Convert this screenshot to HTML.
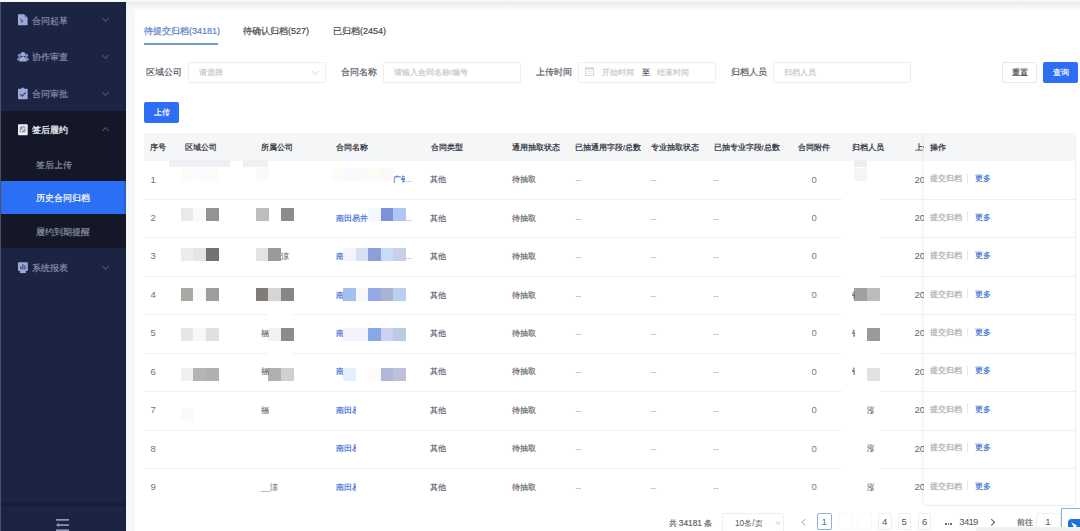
<!DOCTYPE html><html><head><meta charset="utf-8"><style>
*{box-sizing:border-box;margin:0;padding:0}
svg{display:block}
html,body{width:1080px;height:531px;overflow:hidden;background:#fff;font-family:"Liberation Sans",sans-serif;position:relative}
.td,.lbl,.ph,.mt,.st,.btn{-webkit-text-stroke:0.18px currentColor}
.a{position:absolute;white-space:nowrap}
#side{position:absolute;left:0;top:2px;width:126px;height:529px;background:#1b2443}
.mt{position:absolute;left:32px;font-size:8.8px;line-height:12px;color:#868da6;white-space:nowrap}
.st{position:absolute;left:36px;font-size:8.8px;line-height:12px;color:#8b90a0;white-space:nowrap}
.chev{position:absolute;left:103px;width:5px;height:5px;border-right:1px solid #4d5679;border-bottom:1px solid #4d5679;transform:rotate(45deg)}
.lbl{position:absolute;font-size:9px;color:#555b66;line-height:12px;white-space:nowrap}
.inp{position:absolute;border:1px solid #edeef1;border-radius:2px;background:#fff;height:21px;top:61.5px}
.ph{position:absolute;font-size:8px;color:#c5c8ce;line-height:12px;white-space:nowrap}
.btn{position:absolute;border-radius:2px;height:21px;font-size:8px;line-height:21px;text-align:center}
.th{position:absolute;font-size:7.6px;font-weight:bold;color:#3c4048;line-height:12px;white-space:nowrap}
.td{position:absolute;font-size:8px;color:#62666e;line-height:12px;white-space:nowrap}
.lk{color:#3e6fd6}
.n{font-size:9.5px;-webkit-text-stroke:0}
.rl{position:absolute;left:144px;width:931px;height:1px;background:#f0f1f4}
.b{position:absolute;width:12.4px;height:13px}
.pg{position:absolute;top:513px;height:17px;border:1px solid #e4e6ea;border-radius:2px;font-size:8px;line-height:15px;text-align:center;color:#555;background:#fff}
</style></head><body>
<div class="a" style="left:0;top:0;width:1080px;height:531px;background:#f6f7fa"></div>
<div class="a" style="left:134.5px;top:0;width:945.5px;height:531px;background:#fff"></div>
<div class="a" style="left:0;top:0;width:1080px;height:12px;background:linear-gradient(#f7f7f8 0px,#f7f7f8 1.5px,#e8e9eb 2.5px,#f3f4f5 6px,rgba(255,255,255,0) 12px)"></div>
<div id="side">
<div class="a" style="left:0;top:109px;width:126px;height:137px;background:#131727"></div>
<div class="a" style="left:0;top:178.6px;width:126px;height:33.7px;background:#2a6ff4"></div>
<div class="mt" style="top:12.5px;color:#868da6">合同起草</div>
<div class="a" style="left:17px;top:11.0px;width:12px;height:13px"><svg width="12" height="13" viewBox="0 0 12 13"><path d="M1 1.3h6l3.6 3.4v7.6H1z" fill="#9ea9d8"/><path d="M7.2 1.5l3.2 3.1h-3.2z" fill="#7f8cc0"/><path d="M3.8 6.2v4l3.2-2z" fill="#5a6799"/><rect x="3.2" y="5.6" width="1.4" height="1.4" fill="#5a6799"/></svg></div>
<div class="chev" style="top:14.0px"></div>
<div class="mt" style="top:49.3px;color:#868da6">协作审查</div>
<div class="a" style="left:17px;top:48.3px;width:12px;height:13px"><svg width="12" height="13" viewBox="0 0 12 13"><circle cx="2.5" cy="5.4" r="1.7" fill="#7d88bd"/><circle cx="9.5" cy="5.4" r="1.7" fill="#7d88bd"/><path d="M0 10.6c0-2.3 1-3.4 2.5-3.4s2.5 1.1 2.5 3.4z" fill="#7d88bd"/><path d="M7 10.6c0-2.3 1-3.4 2.5-3.4s2.5 1.1 2.5 3.4z" fill="#7d88bd"/><circle cx="6" cy="4.3" r="2.4" fill="#9ea9d8"/><path d="M2.3 11.5c0-3.2 1.6-4.7 3.7-4.7s3.7 1.5 3.7 4.7z" fill="#9ea9d8"/></svg></div>
<div class="chev" style="top:50.8px"></div>
<div class="mt" style="top:86.0px;color:#868da6">合同审批</div>
<div class="a" style="left:17px;top:84.5px;width:12px;height:13px"><svg width="12" height="13" viewBox="0 0 12 13"><rect x="1" y="1.8" width="9.7" height="10.5" rx="0.6" fill="#9ea9d8"/><rect x="4.4" y="0.8" width="2.9" height="1.6" rx="0.5" fill="#9ea9d8"/><path d="M3.3 7.2l1.9 1.9 3.4-3.6" stroke="#3c4777" stroke-width="1.3" fill="none"/></svg></div>
<div class="chev" style="top:87.5px"></div>
<div class="mt" style="top:122.3px;color:#e9eaf0;-webkit-text-stroke:0.3px #e9eaf0">签后履约</div>
<div class="a" style="left:17px;top:120.8px;width:12px;height:13px"><svg width="12" height="13" viewBox="0 0 12 13"><rect x="1" y="1.3" width="9.8" height="11" rx="1" fill="#eef0f4"/><rect x="2.6" y="3.2" width="6" height="6.2" rx="1.2" fill="#9fa3ad"/><path d="M3.8 8.4l3.6-3.6" stroke="#eef0f4" stroke-width="1.1"/><rect x="9.9" y="2" width="0.9" height="10" fill="#c9a9a9"/></svg></div>
<div class="chev" style="top:125.8px;transform:rotate(225deg)"></div>
<div class="mt" style="top:260.0px;color:#868da6">系统报表</div>
<div class="a" style="left:17px;top:258.5px;width:12px;height:13px"><svg width="12" height="13" viewBox="0 0 12 13"><rect x="1" y="1.3" width="9.8" height="8.8" rx="0.8" fill="#9ea9d8"/><rect x="3" y="9.5" width="5.8" height="2.6" fill="#9ea9d8"/><rect x="3.3" y="5.2" width="1.2" height="3.3" fill="#3b4678"/><rect x="5.3" y="3.2" width="1.2" height="5.3" fill="#3b4678"/><rect x="7.3" y="4.4" width="1.2" height="4.1" fill="#3b4678"/></svg></div>
<div class="chev" style="top:261.5px"></div>
<div class="st" style="top:157.0px;color:#8b90a0">签后上传</div>
<div class="st" style="top:190.0px;color:#ffffff">历史合同归档</div>
<div class="st" style="top:224.0px;color:#8b90a0">履约到期提醒</div>
<div class="a" style="left:0;top:499.5px;width:126px;height:5px;background:linear-gradient(rgba(15,20,40,0),rgba(15,20,40,.55) 45%,rgba(15,20,40,0))"></div>
<div class="a" style="left:56px;top:517.0px"><svg width="14" height="14" viewBox="0 0 14 14"><rect x="0" y="0" width="13" height="1.7" fill="#8d96b4"/><rect x="1.8" y="5.2" width="11.2" height="1.7" fill="#8d96b4"/><path d="M0 6.05L2.8 3.8v4.5z" fill="#8d96b4"/><rect x="0" y="10.3" width="13" height="1.7" fill="#8d96b4"/></svg></div>
<div class="a" style="left:123px;top:0;width:3px;height:529px;background:linear-gradient(90deg,rgba(10,14,30,0),rgba(10,14,30,.2))"></div>
</div>
<div class="a" style="left:0;top:2px;width:1px;height:529px;background:#4a5068"></div>
<div class="lbl" style="left:144px;top:25px;color:#5b7cc4">待提交归档(34181)</div>
<div class="a" style="left:144px;top:43px;width:74px;height:2px;background:#6f9bc0"></div>
<div class="lbl" style="left:243px;top:25px;color:#44484f">待确认归档(527)</div>
<div class="lbl" style="left:333px;top:25px;color:#44484f">已归档(2454)</div>
<div class="lbl" style="left:145.5px;top:66px">区域公司</div>
<div class="inp" style="left:188px;width:138px"></div>
<div class="ph" style="left:199px;top:66.5px">请选择</div>
<div class="chev" style="left:313px;top:68.5px;border-color:#dcdee2"></div>
<div class="lbl" style="left:340.5px;top:66px">合同名称</div>
<div class="inp" style="left:383px;width:138px"></div>
<div class="ph" style="left:393.5px;top:66.5px">请输入合同名称/编号</div>
<div class="lbl" style="left:535.5px;top:66px">上传时间</div>
<div class="inp" style="left:578px;width:138px"></div>
<div class="a" style="left:584.5px;top:67.3px"><svg width="9" height="9" viewBox="0 0 9 9"><rect x="0.5" y="0.8" width="8" height="7.7" fill="none" stroke="#d3d5d9" stroke-width="0.9"/><rect x="0.5" y="0.8" width="8" height="1.8" fill="#d3d5d9"/><path d="M2 4.5h5M2 6.5h5" stroke="#e0e2e5" stroke-width="0.8"/></svg></div>
<div class="ph" style="left:601.5px;top:66.5px">开始时间</div>
<div class="ph" style="left:642px;top:66.5px;color:#44484f">至</div>
<div class="ph" style="left:657px;top:66.5px">结束时间</div>
<div class="lbl" style="left:730.5px;top:66px">归档人员</div>
<div class="inp" style="left:773px;width:138px"></div>
<div class="ph" style="left:783.5px;top:66.5px">归档人员</div>
<div class="btn" style="left:1002px;top:61.5px;width:35px;border:1px solid #e8e9ed;color:#3a3d44;line-height:19px;font-size:7.6px">重置</div>
<div class="btn" style="left:1043px;top:61.5px;width:35px;background:#2e6ef5;color:#fff;font-size:7.6px">查询</div>
<div class="btn" style="left:144px;top:102px;width:35px;background:#2e6ef5;color:#fff">上传</div>
<div class="a" style="left:144px;top:133px;width:931px;height:28px;background:#f5f6f8"></div>
<div class="th" style="left:150.4px;top:142px">序号</div>
<div class="th" style="left:185.2px;top:142px">区域公司</div>
<div class="th" style="left:260.5px;top:142px">所属公司</div>
<div class="th" style="left:336.0px;top:142px">合同名称</div>
<div class="th" style="left:430.5px;top:142px">合同类型</div>
<div class="th" style="left:511.7px;top:142px">通用抽取状态</div>
<div class="th" style="left:575.0px;top:142px">已抽通用字段/总数</div>
<div class="th" style="left:650.5px;top:142px">专业抽取状态</div>
<div class="th" style="left:713.6px;top:142px">已抽专业字段/总数</div>
<div class="th" style="left:798.3px;top:142px">合同附件</div>
<div class="th" style="left:852.0px;top:142px">归档人员</div>
<div class="th" style="left:914.5px;top:142px">上传时间</div>
<div class="td n" style="left:150.5px;top:173.6px;color:#6e7177">1</div>
<div class="td" style="left:429.8px;top:174.2px">其他</div>
<div class="td" style="left:511.7px;top:174.2px">待抽取</div>
<div class="td" style="left:575.5px;top:174.2px;color:#8e9197;-webkit-text-stroke:0">--</div>
<div class="td" style="left:650.5px;top:174.2px;color:#8e9197;-webkit-text-stroke:0">--</div>
<div class="td" style="left:713.6px;top:174.2px;color:#8e9197;-webkit-text-stroke:0">--</div>
<div class="td n" style="left:811.5px;top:173.6px;color:#777a80">0</div>
<div class="td n" style="left:914.5px;top:173.6px">2024</div>
<div class="rl" style="top:199.0px"></div>
<div class="a" style="left:842px;top:199.0px;width:38px;height:1px;background:#fff"></div>
<div class="td n" style="left:150.5px;top:212.0px;color:#6e7177">2</div>
<div class="td" style="left:429.8px;top:212.6px">其他</div>
<div class="td" style="left:511.7px;top:212.6px">待抽取</div>
<div class="td" style="left:575.5px;top:212.6px;color:#8e9197;-webkit-text-stroke:0">--</div>
<div class="td" style="left:650.5px;top:212.6px;color:#8e9197;-webkit-text-stroke:0">--</div>
<div class="td" style="left:713.6px;top:212.6px;color:#8e9197;-webkit-text-stroke:0">--</div>
<div class="td n" style="left:811.5px;top:212.0px;color:#777a80">0</div>
<div class="td n" style="left:914.5px;top:212.0px">2024</div>
<div class="rl" style="top:237.4px"></div>
<div class="a" style="left:842px;top:237.4px;width:38px;height:1px;background:#fff"></div>
<div class="td n" style="left:150.5px;top:250.4px;color:#6e7177">3</div>
<div class="td" style="left:429.8px;top:251.0px">其他</div>
<div class="td" style="left:511.7px;top:251.0px">待抽取</div>
<div class="td" style="left:575.5px;top:251.0px;color:#8e9197;-webkit-text-stroke:0">--</div>
<div class="td" style="left:650.5px;top:251.0px;color:#8e9197;-webkit-text-stroke:0">--</div>
<div class="td" style="left:713.6px;top:251.0px;color:#8e9197;-webkit-text-stroke:0">--</div>
<div class="td n" style="left:811.5px;top:250.4px;color:#777a80">0</div>
<div class="td n" style="left:914.5px;top:250.4px">2024</div>
<div class="rl" style="top:275.9px"></div>
<div class="a" style="left:842px;top:275.9px;width:38px;height:1px;background:#fff"></div>
<div class="td n" style="left:150.5px;top:288.9px;color:#6e7177">4</div>
<div class="td" style="left:429.8px;top:289.5px">其他</div>
<div class="td" style="left:511.7px;top:289.5px">待抽取</div>
<div class="td" style="left:575.5px;top:289.5px;color:#8e9197;-webkit-text-stroke:0">--</div>
<div class="td" style="left:650.5px;top:289.5px;color:#8e9197;-webkit-text-stroke:0">--</div>
<div class="td" style="left:713.6px;top:289.5px;color:#8e9197;-webkit-text-stroke:0">--</div>
<div class="td n" style="left:811.5px;top:288.9px;color:#777a80">0</div>
<div class="td n" style="left:914.5px;top:288.9px">2024</div>
<div class="rl" style="top:314.3px"></div>
<div class="a" style="left:842px;top:314.3px;width:38px;height:1px;background:#fff"></div>
<div class="a" style="left:268px;top:314.3px;width:25px;height:1px;background:#fff"></div>
<div class="td n" style="left:150.5px;top:327.3px;color:#6e7177">5</div>
<div class="td" style="left:429.8px;top:327.9px">其他</div>
<div class="td" style="left:511.7px;top:327.9px">待抽取</div>
<div class="td" style="left:575.5px;top:327.9px;color:#8e9197;-webkit-text-stroke:0">--</div>
<div class="td" style="left:650.5px;top:327.9px;color:#8e9197;-webkit-text-stroke:0">--</div>
<div class="td" style="left:713.6px;top:327.9px;color:#8e9197;-webkit-text-stroke:0">--</div>
<div class="td n" style="left:811.5px;top:327.3px;color:#777a80">0</div>
<div class="td n" style="left:914.5px;top:327.3px">2024</div>
<div class="rl" style="top:352.7px"></div>
<div class="a" style="left:842px;top:352.7px;width:38px;height:1px;background:#fff"></div>
<div class="a" style="left:268px;top:352.7px;width:25px;height:1px;background:#fff"></div>
<div class="td n" style="left:150.5px;top:365.7px;color:#6e7177">6</div>
<div class="td" style="left:429.8px;top:366.3px">其他</div>
<div class="td" style="left:511.7px;top:366.3px">待抽取</div>
<div class="td" style="left:575.5px;top:366.3px;color:#8e9197;-webkit-text-stroke:0">--</div>
<div class="td" style="left:650.5px;top:366.3px;color:#8e9197;-webkit-text-stroke:0">--</div>
<div class="td" style="left:713.6px;top:366.3px;color:#8e9197;-webkit-text-stroke:0">--</div>
<div class="td n" style="left:811.5px;top:365.7px;color:#777a80">0</div>
<div class="td n" style="left:914.5px;top:365.7px">2024</div>
<div class="rl" style="top:391.1px"></div>
<div class="a" style="left:842px;top:391.1px;width:38px;height:1px;background:#fff"></div>
<div class="td n" style="left:150.5px;top:404.1px;color:#6e7177">7</div>
<div class="td" style="left:429.8px;top:404.7px">其他</div>
<div class="td" style="left:511.7px;top:404.7px">待抽取</div>
<div class="td" style="left:575.5px;top:404.7px;color:#8e9197;-webkit-text-stroke:0">--</div>
<div class="td" style="left:650.5px;top:404.7px;color:#8e9197;-webkit-text-stroke:0">--</div>
<div class="td" style="left:713.6px;top:404.7px;color:#8e9197;-webkit-text-stroke:0">--</div>
<div class="td n" style="left:811.5px;top:404.1px;color:#777a80">0</div>
<div class="td n" style="left:914.5px;top:404.1px">2024</div>
<div class="rl" style="top:429.5px"></div>
<div class="a" style="left:842px;top:429.5px;width:38px;height:1px;background:#fff"></div>
<div class="td n" style="left:150.5px;top:442.6px;color:#6e7177">8</div>
<div class="td" style="left:429.8px;top:443.1px">其他</div>
<div class="td" style="left:511.7px;top:443.1px">待抽取</div>
<div class="td" style="left:575.5px;top:443.1px;color:#8e9197;-webkit-text-stroke:0">--</div>
<div class="td" style="left:650.5px;top:443.1px;color:#8e9197;-webkit-text-stroke:0">--</div>
<div class="td" style="left:713.6px;top:443.1px;color:#8e9197;-webkit-text-stroke:0">--</div>
<div class="td n" style="left:811.5px;top:442.6px;color:#777a80">0</div>
<div class="td n" style="left:914.5px;top:442.6px">2024</div>
<div class="rl" style="top:468.0px"></div>
<div class="a" style="left:842px;top:468.0px;width:38px;height:1px;background:#fff"></div>
<div class="td n" style="left:150.5px;top:481.0px;color:#6e7177">9</div>
<div class="td" style="left:429.8px;top:481.6px">其他</div>
<div class="td" style="left:511.7px;top:481.6px">待抽取</div>
<div class="td" style="left:575.5px;top:481.6px;color:#8e9197;-webkit-text-stroke:0">--</div>
<div class="td" style="left:650.5px;top:481.6px;color:#8e9197;-webkit-text-stroke:0">--</div>
<div class="td" style="left:713.6px;top:481.6px;color:#8e9197;-webkit-text-stroke:0">--</div>
<div class="td n" style="left:811.5px;top:481.0px;color:#777a80">0</div>
<div class="td n" style="left:914.5px;top:481.0px">2024</div>
<div class="a" style="left:168.7px;top:160px;width:61.6px;height:7px;background:#eef0f3"></div>
<div class="a" style="left:243.3px;top:160px;width:25px;height:7px;background:#eef0f3"></div>
<div class="a" style="left:854px;top:160px;width:13px;height:7px;background:#eceef1"></div>
<div class="b" style="left:181.00px;top:168.0px;width:12.77px;background:#fbfbfa"></div>
<div class="b" style="left:193.47px;top:168.0px;width:12.77px;background:#fcfbfd"></div>
<div class="b" style="left:205.94px;top:168.0px;width:12.77px;background:#fcfcf6"></div>
<div class="b" style="left:255.82px;top:168.0px;width:12.77px;background:#fafafa"></div>
<div class="b" style="left:330.64px;top:168.0px;width:12.77px;background:#fdfdf5"></div>
<div class="b" style="left:343.11px;top:168.0px;width:12.77px;background:#fdf7fd"></div>
<div class="b" style="left:355.58px;top:168.0px;width:12.77px;background:#f6fcfb"></div>
<div class="b" style="left:368.05px;top:168.0px;width:12.77px;background:#fcfcf4"></div>
<div class="b" style="left:380.52px;top:168.0px;width:12.77px;background:#fbf7fc"></div>
<div class="b" style="left:854.38px;top:168.0px;width:12.77px;background:#f4f5f7"></div>
<div class="b" style="left:181.00px;top:208.0px;width:12.77px;background:#e8eae9"></div>
<div class="b" style="left:193.47px;top:208.0px;width:12.77px;background:#f9fafb"></div>
<div class="b" style="left:205.94px;top:208.0px;width:12.77px;background:#939393"></div>
<div class="b" style="left:255.82px;top:208.0px;width:12.77px;background:#bdbdbd"></div>
<div class="b" style="left:280.76px;top:208.0px;width:12.77px;background:#8c8c8c"></div>
<div class="b" style="left:368.05px;top:208.0px;width:12.77px;background:#f2f8fe"></div>
<div class="b" style="left:380.52px;top:208.0px;width:12.77px;background:#7b93d8"></div>
<div class="b" style="left:392.99px;top:208.0px;width:12.77px;background:#b0c6f5"></div>
<div class="b" style="left:181.00px;top:248.0px;width:12.77px;background:#ebeceb"></div>
<div class="b" style="left:193.47px;top:248.0px;width:12.77px;background:#e5e6e3"></div>
<div class="b" style="left:205.94px;top:248.0px;width:12.77px;background:#737373"></div>
<div class="b" style="left:255.82px;top:248.0px;width:12.77px;background:#e3e3e3"></div>
<div class="b" style="left:268.29px;top:248.0px;width:12.77px;background:#9a9a9a"></div>
<div class="b" style="left:343.11px;top:248.0px;width:12.77px;background:#f5f3fb"></div>
<div class="b" style="left:355.58px;top:248.0px;width:12.77px;background:#d6e1f3"></div>
<div class="b" style="left:368.05px;top:248.0px;width:12.77px;background:#8c9fd7"></div>
<div class="b" style="left:380.52px;top:248.0px;width:12.77px;background:#c6dcf8"></div>
<div class="b" style="left:392.99px;top:248.0px;width:12.77px;background:#c8cfeb"></div>
<div class="b" style="left:181.00px;top:288.0px;width:12.77px;background:#a8a8a4"></div>
<div class="b" style="left:193.47px;top:288.0px;width:12.77px;background:#fafafa"></div>
<div class="b" style="left:205.94px;top:288.0px;width:12.77px;background:#9e9c9e"></div>
<div class="b" style="left:255.82px;top:288.0px;width:12.77px;background:#807c7a"></div>
<div class="b" style="left:268.29px;top:288.0px;width:12.77px;background:#d5d5d5"></div>
<div class="b" style="left:280.76px;top:288.0px;width:12.77px;background:#868686"></div>
<div class="b" style="left:343.11px;top:288.0px;width:12.77px;background:#a3bfeb"></div>
<div class="b" style="left:355.58px;top:288.0px;width:12.77px;background:#f8f6fd"></div>
<div class="b" style="left:368.05px;top:288.0px;width:12.77px;background:#94a8e8"></div>
<div class="b" style="left:380.52px;top:288.0px;width:12.77px;background:#a9b3d3"></div>
<div class="b" style="left:392.99px;top:288.0px;width:12.77px;background:#bccdf2"></div>
<div class="b" style="left:854.38px;top:288.0px;width:12.77px;background:#a0a0a0"></div>
<div class="b" style="left:866.85px;top:288.0px;width:12.77px;background:#bcbcbc"></div>
<div class="b" style="left:181.00px;top:328.0px;width:12.77px;background:#e6e6e6"></div>
<div class="b" style="left:193.47px;top:328.0px;width:12.77px;background:#f8f8f8"></div>
<div class="b" style="left:205.94px;top:328.0px;width:12.77px;background:#e0e0e0"></div>
<div class="b" style="left:268.29px;top:328.0px;width:12.77px;background:#f2f2f2"></div>
<div class="b" style="left:280.76px;top:328.0px;width:12.77px;background:#8c8c8c"></div>
<div class="b" style="left:343.11px;top:328.0px;width:12.77px;background:#f3f2fb"></div>
<div class="b" style="left:355.58px;top:328.0px;width:12.77px;background:#f3f2fb"></div>
<div class="b" style="left:368.05px;top:328.0px;width:12.77px;background:#86a9e6"></div>
<div class="b" style="left:380.52px;top:328.0px;width:12.77px;background:#cdd0f2"></div>
<div class="b" style="left:392.99px;top:328.0px;width:12.77px;background:#bccbe5"></div>
<div class="b" style="left:866.85px;top:328.0px;width:12.77px;background:#999999"></div>
<div class="b" style="left:181.00px;top:368.0px;width:12.77px;background:#f0f1ee"></div>
<div class="b" style="left:193.47px;top:368.0px;width:12.77px;background:#b4b4b6"></div>
<div class="b" style="left:205.94px;top:368.0px;width:12.77px;background:#b0b0b2"></div>
<div class="b" style="left:268.29px;top:368.0px;width:12.77px;background:#b0b0b0"></div>
<div class="b" style="left:280.76px;top:368.0px;width:12.77px;background:#d0d0d2"></div>
<div class="b" style="left:343.11px;top:368.0px;width:12.77px;background:#e3effd"></div>
<div class="b" style="left:368.05px;top:368.0px;width:12.77px;background:#fbfcf9"></div>
<div class="b" style="left:380.52px;top:368.0px;width:12.77px;background:#b0b7d8"></div>
<div class="b" style="left:392.99px;top:368.0px;width:12.77px;background:#bec0dc"></div>
<div class="b" style="left:866.85px;top:368.0px;width:12.77px;background:#e2e2e2"></div>
<div class="b" style="left:181.00px;top:408.0px;width:12.77px;background:#fafafa"></div>
<div class="td" style="left:336.0px;top:212.6px;color:#3e6fd6;width:32.0px;overflow:hidden">南田易井|</div>
<div class="td" style="left:336.0px;top:251.0px;color:#3e6fd6;width:7.0px;overflow:hidden">南</div>
<div class="td" style="left:336.0px;top:289.5px;color:#3e6fd6;width:7.0px;overflow:hidden">南</div>
<div class="td" style="left:336.0px;top:327.9px;color:#3e6fd6;width:7.0px;overflow:hidden">南</div>
<div class="td" style="left:336.0px;top:366.3px;color:#3e6fd6;width:7.0px;overflow:hidden">南</div>
<div class="td" style="left:336.0px;top:404.7px;color:#3e6fd6;width:20.0px;overflow:hidden">南田易</div>
<div class="td" style="left:336.0px;top:443.1px;color:#3e6fd6;width:20.0px;overflow:hidden">南田易</div>
<div class="td" style="left:336.0px;top:481.6px;color:#3e6fd6;width:20.0px;overflow:hidden">南田易</div>
<div class="td" style="left:392.5px;top:174.2px;color:#3e6fd6;width:12.0px;overflow:hidden">广铎</div>
<div class="td" style="left:405.5px;top:174.2px;color:#aaa">...</div>
<div class="td" style="left:405.5px;top:212.6px;color:#aaa">...</div>
<div class="td" style="left:405.5px;top:251.0px;color:#aaa">...</div>
<div class="td" style="left:280.6px;top:251.0px;color:#6b6f78">涼</div>
<div class="td" style="left:260.5px;top:327.9px;color:#6b6f78;width:8.0px;overflow:hidden">福</div>
<div class="td" style="left:260.5px;top:366.3px;color:#6b6f78;width:8.0px;overflow:hidden">福</div>
<div class="td" style="left:260.5px;top:404.7px;color:#6b6f78;width:8.0px;overflow:hidden">福</div>
<div class="td" style="left:261.0px;top:481.6px;color:#7a7d83">__涼</div>
<div class="td" style="left:851.5px;top:289.5px;color:#6b6f78;width:3.0px;overflow:hidden">钱</div>
<div class="td" style="left:851.5px;top:327.9px;color:#6b6f78;width:3.0px;overflow:hidden">钱</div>
<div class="td" style="left:851.5px;top:366.3px;color:#6b6f78;width:3.0px;overflow:hidden">钱</div>
<div class="td" style="left:866.8px;top:404.7px;color:#6b6f78;width:7.0px;overflow:hidden">泓</div>
<div class="td" style="left:866.8px;top:443.1px;color:#6b6f78;width:7.0px;overflow:hidden">泓</div>
<div class="td" style="left:866.8px;top:481.6px;color:#6b6f78;width:7.0px;overflow:hidden">泓</div>
<div class="a" style="left:919.5px;top:133px;width:4px;height:372px;background:linear-gradient(90deg,rgba(0,0,0,0),rgba(0,0,0,.045))"></div>
<div class="a" style="left:923.5px;top:133px;width:152px;height:373px;background:#fff;border-right:1px solid #f0f1f3;border-bottom:1px solid #eceef1"></div>
<div class="a" style="left:923.5px;top:133px;width:151px;height:28px;background:#f5f6f8"></div>
<div class="th" style="left:930px;top:142px">操作</div>
<div class="td" style="left:930px;top:173.3px;color:#a8abb1">提交归档</div>
<div class="a" style="left:967px;top:173.8px;width:1px;height:9px;background:#e6e8eb"></div>
<div class="td lk" style="left:974.7px;top:173.3px">更多</div>
<div class="a" style="left:924px;width:151px;height:1px;background:#edeff2;top:199.0px"></div>
<div class="td" style="left:930px;top:211.7px;color:#a8abb1">提交归档</div>
<div class="a" style="left:967px;top:212.2px;width:1px;height:9px;background:#e6e8eb"></div>
<div class="td lk" style="left:974.7px;top:211.7px">更多</div>
<div class="a" style="left:924px;width:151px;height:1px;background:#edeff2;top:237.4px"></div>
<div class="td" style="left:930px;top:250.1px;color:#a8abb1">提交归档</div>
<div class="a" style="left:967px;top:250.6px;width:1px;height:9px;background:#e6e8eb"></div>
<div class="td lk" style="left:974.7px;top:250.1px">更多</div>
<div class="a" style="left:924px;width:151px;height:1px;background:#edeff2;top:275.9px"></div>
<div class="td" style="left:930px;top:288.6px;color:#a8abb1">提交归档</div>
<div class="a" style="left:967px;top:289.1px;width:1px;height:9px;background:#e6e8eb"></div>
<div class="td lk" style="left:974.7px;top:288.6px">更多</div>
<div class="a" style="left:924px;width:151px;height:1px;background:#edeff2;top:314.3px"></div>
<div class="td" style="left:930px;top:327.0px;color:#a8abb1">提交归档</div>
<div class="a" style="left:967px;top:327.5px;width:1px;height:9px;background:#e6e8eb"></div>
<div class="td lk" style="left:974.7px;top:327.0px">更多</div>
<div class="a" style="left:924px;width:151px;height:1px;background:#edeff2;top:352.7px"></div>
<div class="td" style="left:930px;top:365.4px;color:#a8abb1">提交归档</div>
<div class="a" style="left:967px;top:365.9px;width:1px;height:9px;background:#e6e8eb"></div>
<div class="td lk" style="left:974.7px;top:365.4px">更多</div>
<div class="a" style="left:924px;width:151px;height:1px;background:#edeff2;top:391.1px"></div>
<div class="td" style="left:930px;top:403.8px;color:#a8abb1">提交归档</div>
<div class="a" style="left:967px;top:404.3px;width:1px;height:9px;background:#e6e8eb"></div>
<div class="td lk" style="left:974.7px;top:403.8px">更多</div>
<div class="a" style="left:924px;width:151px;height:1px;background:#edeff2;top:429.5px"></div>
<div class="td" style="left:930px;top:442.2px;color:#a8abb1">提交归档</div>
<div class="a" style="left:967px;top:442.8px;width:1px;height:9px;background:#e6e8eb"></div>
<div class="td lk" style="left:974.7px;top:442.2px">更多</div>
<div class="a" style="left:924px;width:151px;height:1px;background:#edeff2;top:468.0px"></div>
<div class="td" style="left:930px;top:480.7px;color:#a8abb1">提交归档</div>
<div class="a" style="left:967px;top:481.2px;width:1px;height:9px;background:#e6e8eb"></div>
<div class="td lk" style="left:974.7px;top:480.7px">更多</div>
<div class="td" style="left:668.5px;top:517px;color:#5a5e66;font-size:8.3px">共 34181 条</div>
<div class="pg" style="left:722px;width:62px;height:20px;text-align:left;padding-left:12px;line-height:19px;font-size:8.3px;border-color:#eceef1">10条/页</div>
<div class="chev" style="left:776px;top:519.5px;border-color:#d0d3d8;width:4px;height:4px"></div>
<div class="chev" style="left:802.5px;top:520px;border-color:#b9bcc2;width:4.5px;height:4.5px;transform:rotate(135deg)"></div>
<div class="pg" style="left:817px;width:14.5px;border-color:#8eb0e4;color:#3a6fd0;font-size:9.5px">1</div>
<div class="pg" style="left:838.0px;width:15.0px;border-color:#f7f7f9;font-size:9.5px;color:#55585f;"></div>
<div class="pg" style="left:856.5px;width:15.0px;border-color:#f7f7f9;font-size:9.5px;color:#55585f;"></div>
<div class="pg" style="left:878.0px;width:13.5px;border-color:#eceef1;font-size:9.5px;color:#55585f;">4</div>
<div class="pg" style="left:897.5px;width:13.5px;border-color:#eceef1;font-size:9.5px;color:#55585f;">5</div>
<div class="pg" style="left:917.8px;width:13.5px;border-color:#eceef1;font-size:9.5px;color:#55585f;">6</div>
<div class="pg" style="left:959.5px;width:19.5px;border-color:#f7f7f9;font-size:9.5px;color:#55585f;letter-spacing:-0.7px;text-indent:-1.5px">3419</div>
<div class="a" style="left:944.9px;top:522.8px;width:1.8px;height:1.9px;background:#6a6d73"></div>
<div class="a" style="left:947.6px;top:522.8px;width:1.8px;height:1.9px;background:#6a6d73"></div>
<div class="a" style="left:950.3px;top:522.8px;width:1.8px;height:1.9px;background:#6a6d73"></div>
<div class="chev" style="left:989px;top:520px;border-color:#5a5e66;width:4.5px;height:4.5px;transform:rotate(-45deg)"></div>
<div class="td" style="left:1016.5px;top:516.3px;color:#5a5e66;font-size:8.3px">前往</div>
<div class="pg" style="left:1035.5px;width:25px;height:20px;border-color:#eceef1;font-size:9.5px;color:#55585f">1</div>
<div class="a" style="left:1061px;top:507.5px;width:25px;height:25px;border:1.5px solid #86b6dc;background:#fff"></div>
<div class="a" style="left:1067.5px;top:519.3px"><svg width="14" height="12" viewBox="0 0 14 12"><rect x="0" y="0" width="16" height="14" rx="3.5" fill="#1b74d4"/><path d="M3.2 3.2L9 6.6 6.5 9.5z" fill="#fff"/></svg></div>
<div class="a" style="left:975.5px;top:527.3px;width:105px;height:4px;background:#eef0f2"></div>
</body></html>
